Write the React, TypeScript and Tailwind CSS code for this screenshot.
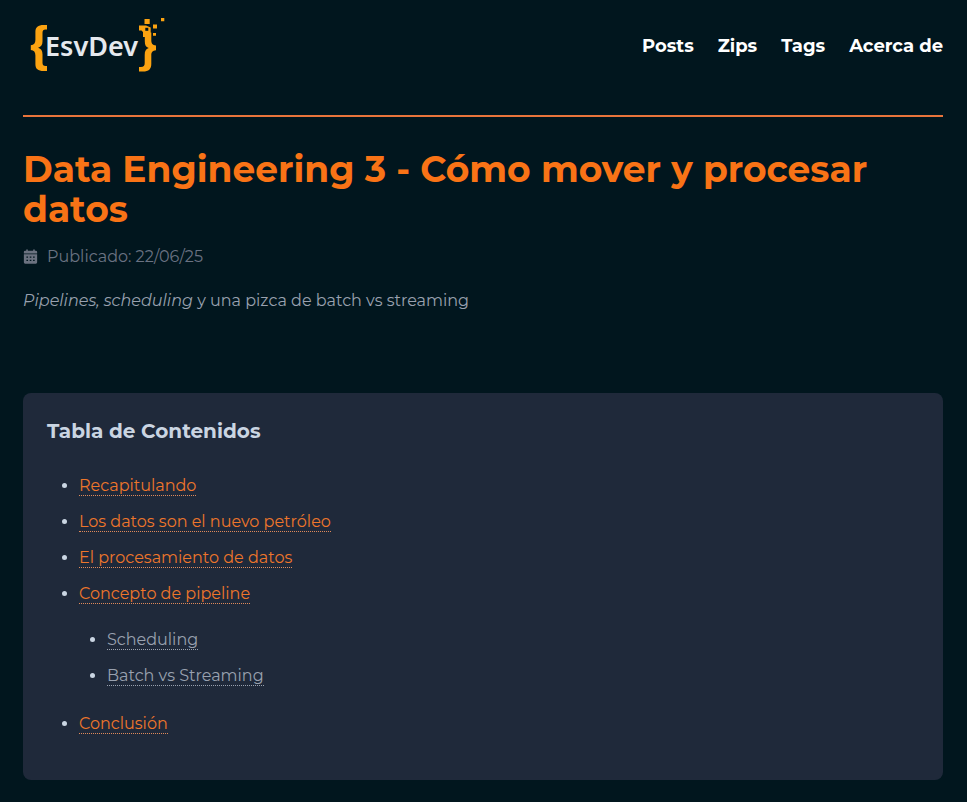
import React from "react";

interface TocEntry {
  title: string;
  href: string;
  children?: TocEntry[];
}

const navLinks = [
  { label: "Posts", href: "#posts" },
  { label: "Zips", href: "#zips" },
  { label: "Tags", href: "#tags" },
  { label: "Acerca de", href: "#acerca-de" },
];

const toc: TocEntry[] = [
  { title: "Recapitulando", href: "#recapitulando" },
  { title: "Los datos son el nuevo petróleo", href: "#petroleo" },
  { title: "El procesamiento de datos", href: "#procesamiento" },
  {
    title: "Concepto de pipeline",
    href: "#pipeline",
    children: [
      { title: "Scheduling", href: "#scheduling" },
      { title: "Batch vs Streaming", href: "#batch-vs-streaming" },
    ],
  },
  { title: "Conclusión", href: "#conclusion" },
];

const Logo: React.FC = () => (
  <svg viewBox="0 0 148 70" className="h-[70px] w-[148px]" role="img" aria-label="EsvDev">
    <g fill="#fca311">
      <path d="M27 15v4.500h-1.500c-2 0-3 1-3 3.200v8.500c0 3.600-1.300 5.600-4.400 6.500 3.100.9 4.400 3 4.400 6.500v8.600c0 2.400 1 3.300 3 3.300H27V61h-3.400c-5.600 0-8.200-2.300-8.200-6.800v-8.800c0-3.200-1.400-5-4.600-5.300v-4.800c3.200-.3 4.600-2 4.600-5.200v-8.300c0-4.600 2.600-6.800 8.200-6.800z" />
      <path d="M119 15.500h7l4.700 2v5h.6v7.500c0 3.600 1.200 5 4.700 5.400v4.900c-3.500.4-4.700 1.900-4.700 5.200v8.500c0 5-2.600 7.500-8.300 7.500h-4v-4.600h1.800c2.900 0 3.900-1.100 3.900-3.900v-8c0-3.800 1-5.900 4-6.900-2.900-1-3.900-3.200-3.900-6.800v-4.300h-1.800V22l-1.500-1.500H119z" />
      <path d="M124.500 9h5.200v5h-5.200zM133 14.400h4v4h-4zM141 8h3.300v3.200H141zM133 23h3v2.800h-3z" />
    </g>
    <path d="M125.300 17.800h3v3h-3z" fill="#01161e" />
    <text x="25" y="46" fill="#e5e9ee" fontFamily="'Noto Sans', sans-serif" fontSize="27" fontWeight="600">
      EsvDev
    </text>
  </svg>
);

const CalendarIcon: React.FC = () => (
  <svg viewBox="0 0 14 14" className="h-4 w-[15px]" fill="#6b7280" aria-hidden="true">
    <path
      fillRule="evenodd"
      d="M3 0h1.500v1.200h5V0H11v1.200h1A1.200 1.200 0 0 1 13.200 2.400V3.800H.8V2.400A1.200 1.200 0 0 1 2 1.200h1zM.8 4.500h12.400v7.500a1.200 1.200 0 0 1-1.200 1.200H2A1.200 1.200 0 0 1 .8 12zM3.200 6.500v1.300h1.500V6.500zm3.100 0v1.300h1.500V6.500zm3.100 0v1.300h1.500V6.500zM3.200 9.500v1.300h1.500V9.500zm3.100 0v1.300h1.500V9.500zm3.100 0v1.300h1.500V9.500z"
    />
  </svg>
);

const TocLink: React.FC<{ entry: TocEntry; nested?: boolean }> = ({ entry, nested }) => (
  <a
    href={entry.href}
    className={
      nested
        ? "border-b border-dotted border-gray-400 text-gray-400"
        : "border-b border-dotted border-[#e08a5a] text-[#ee762b]"
    }
  >
    {entry.title}
  </a>
);

const App: React.FC = () => {
  return (
    <div className="min-h-screen bg-[#01161e] pr-6 pl-[23px] font-['Montserrat','Inter',sans-serif] text-slate-300">
      <div className="mx-auto max-w-[920px] pb-[22px]">
        <header className="flex h-[117px] items-start justify-between border-b-2 border-[#e8743b] pt-2.5">
          <a href="#inicio" className="-ml-[3px]">
            <Logo />
          </a>
          <nav className="flex gap-6 pt-[22px] text-lg font-bold text-white">
            {navLinks.map((link) => (
              <a key={link.label} href={link.href}>
                {link.label}
              </a>
            ))}
          </nav>
        </header>

        <main>
          <h1 className="mt-8 text-4xl leading-10 font-bold text-[#f97316]">
            Data Engineering 3 - Cómo mover y procesar datos
          </h1>
          <p className="mt-4 flex items-center gap-[9px] text-gray-500">
            <CalendarIcon />
            <span>Publicado: 22/06/25</span>
          </p>
          <p className="mt-5 text-gray-400">
            <em>Pipelines, scheduling</em> y una pizca de batch vs streaming
          </p>

          <section className="mt-20 rounded-lg bg-[#1f293a] px-6 pt-6 pb-[42px]">
            <h2 className="text-xl leading-7 font-bold">Tabla de Contenidos</h2>
            <ul className="mt-[27px] list-disc space-y-2 pl-8 leading-7">
              {toc.map((entry) => (
                <li key={entry.href}>
                  <TocLink entry={entry} />
                  {entry.children && (
                    <ul className="mt-[18px] mb-5 list-disc space-y-2 pl-7">
                      {entry.children.map((child) => (
                        <li key={child.href}>
                          <TocLink entry={child} nested />
                        </li>
                      ))}
                    </ul>
                  )}
                </li>
              ))}
            </ul>
          </section>
        </main>
      </div>
    </div>
  );
};

export default App;
